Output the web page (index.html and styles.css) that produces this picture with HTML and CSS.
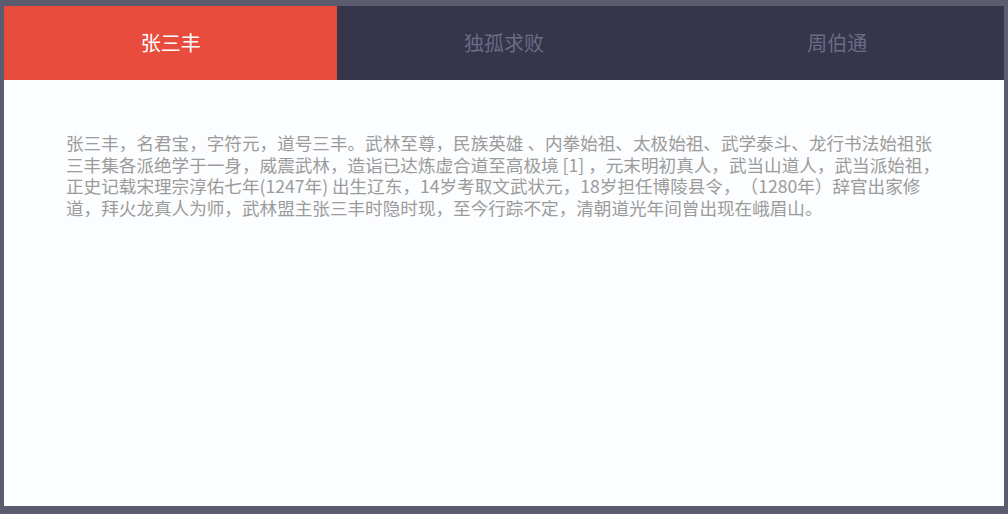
FILE: index.html
```html
<!DOCTYPE html>
<html lang="zh">
<head>
    <meta charset="UTF-8">
    <meta name="viewport" content="width=device-width, initial-scale=1.0">
    <title>选项卡</title>
    <link rel="stylesheet" href="styles.css">
</head>
<body>
    <div class="tabs">
        <ul class="tab-nav">
            <li class="active">张三丰</li>
            <li>独孤求败</li>
            <li>周伯通</li>
        </ul>
        <div class="tab-content">
            <p>张三丰，名君宝，字符元，道号三丰。武林至尊，民族英雄 、内拳始祖、太极始祖、武学泰斗、龙行书法始祖张三丰集各派绝学于一身，威震武林，造诣已达炼虚合道至高极境 [1] ，元末明初真人，武当山道人，武当派始祖，正史记载宋理宗淳佑七年(1247年) 出生辽东，14岁考取文武状元，18岁担任博陵县令，（1280年）辞官出家修道，拜火龙真人为师，武林盟主张三丰时隐时现，至今行踪不定，清朝道光年间曾出现在峨眉山。</p>
        </div>
    </div>
</body>
</html>
```

FILE: styles.css
```css
* {
    box-sizing: border-box;
}

html,
body {
    height: 100%;
}

body {
    margin: 0;
    padding: 6px 4px 8px;
    background-color: #5c5b6f;
    font-family: "Microsoft YaHei", "Noto Sans CJK SC", sans-serif;
    text-spacing-trim: space-all;
}

.tabs {
    width: 1000px;
    height: 500px;
    display: flex;
    flex-direction: column;
    background: #fbfdfe;
}

.tab-nav {
    display: flex;
    margin: 0;
    padding: 0;
    list-style: none;
    background-color: #35354b;
}

.tab-nav li {
    flex: 1;
    height: 74px;
    line-height: 74px;
    text-align: center;
    font-size: 20px;
    color: #6b6b86;
    cursor: pointer;
}

.tab-nav li.active {
    background-color: #e84c3d;
    color: #fff;
}

.tab-content {
    flex: 1;
    padding: 52px 62px;
}

.tab-content p {
    margin: 0;
    font-size: 1.1em;
    line-height: 21.5px;
    color: #9b9b9b;
}
```
